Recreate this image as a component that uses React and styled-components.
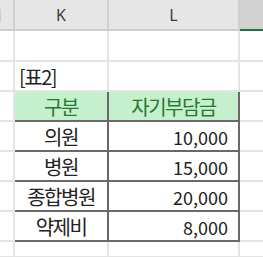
import React from "react";
import styled, { createGlobalStyle } from "styled-components";

const Global = createGlobalStyle`
  html, body { margin: 0; padding: 0; background: #ffffff; overflow: hidden; }
  body { width: 263px; height: 257px; }
`;

const Sheet = styled.table`
  border-collapse: collapse;
  table-layout: fixed;
  width: 263px;
  font-family: "Noto Sans CJK KR", "Noto Sans", sans-serif;
`;

const ColHead = styled.th`
  height: 29px;
  padding: 0;
  background: ${(p) => (p.$selected ? "#d2d2d2" : "#e6e6e6")};
  border-right: 2px solid #d0d0d0;
  border-bottom: 2px solid ${(p) => (p.$selected ? "#217346" : "#cdcdcd")};
  font-family: "Noto Sans", "Noto Sans CJK KR", sans-serif;
  font-weight: 400;
  font-size: 16px;
  color: #3a3a3a;
  text-align: ${(p) => (p.$clip ? "left" : "center")};
  text-indent: ${(p) => (p.$clip ? "-3px" : "0")};
  overflow: hidden;
  white-space: nowrap;
  &:first-child { border-left: none; }
  &:last-child { border-right: none; }
`;

const Row = styled.tr`
  height: ${(p) => p.$h || 30}px;
`;

const Cell = styled.td`
  padding: 0 ${(p) => (p.$align === "right" ? "10px" : "4px")} 1px 4px;
  border: 2px solid ${(p) => (p.$boxed ? "#696969" : "#e4e4e4")};
  background: ${(p) => (p.$head ? "#c6efce" : "transparent")};
  color: ${(p) => (p.$head ? "#237a30" : "#222222")};
  font-size: ${(p) => (p.$num ? 18 : 20)}px;
  letter-spacing: ${(p) => (p.$num ? 0 : -1.5)}px;
  line-height: 24px;
  vertical-align: bottom;
  text-align: ${(p) => p.$align || "left"};
  white-space: nowrap;
  overflow: visible;
  &:first-child { border-left: none; }
  &:last-child { border-right: none; }
`;

const rows = [
  ["의원", "10,000"],
  ["병원", "15,000"],
  ["종합병원", "20,000"],
  ["약제비", "8,000"],
];

export default function App() {
  return (
    <>
      <Global />
      <Sheet>
        <colgroup>
          <col style={{ width: 14 }} />
          <col style={{ width: 94 }} />
          <col style={{ width: 131 }} />
          <col style={{ width: 24 }} />
        </colgroup>
        <thead>
          <tr>
            <ColHead $clip>J</ColHead>
            <ColHead>K</ColHead>
            <ColHead>L</ColHead>
            <ColHead $selected></ColHead>
          </tr>
        </thead>
        <tbody>
          <Row $h={31}>
            <Cell /><Cell /><Cell /><Cell />
          </Row>
          <Row>
            <Cell />
            <Cell>[표2]</Cell>
            <Cell />
            <Cell />
          </Row>
          <Row>
            <Cell />
            <Cell $boxed $head $align="center">구분</Cell>
            <Cell $boxed $head $align="center">자기부담금</Cell>
            <Cell />
          </Row>
          {rows.map(([name, amount]) => (
            <Row key={name}>
              <Cell />
              <Cell $boxed $align="center">{name}</Cell>
              <Cell $boxed $num $align="right">{amount}</Cell>
              <Cell />
            </Row>
          ))}
          <Row $h={16}>
            <Cell /><Cell /><Cell /><Cell />
          </Row>
        </tbody>
      </Sheet>
    </>
  );
}
